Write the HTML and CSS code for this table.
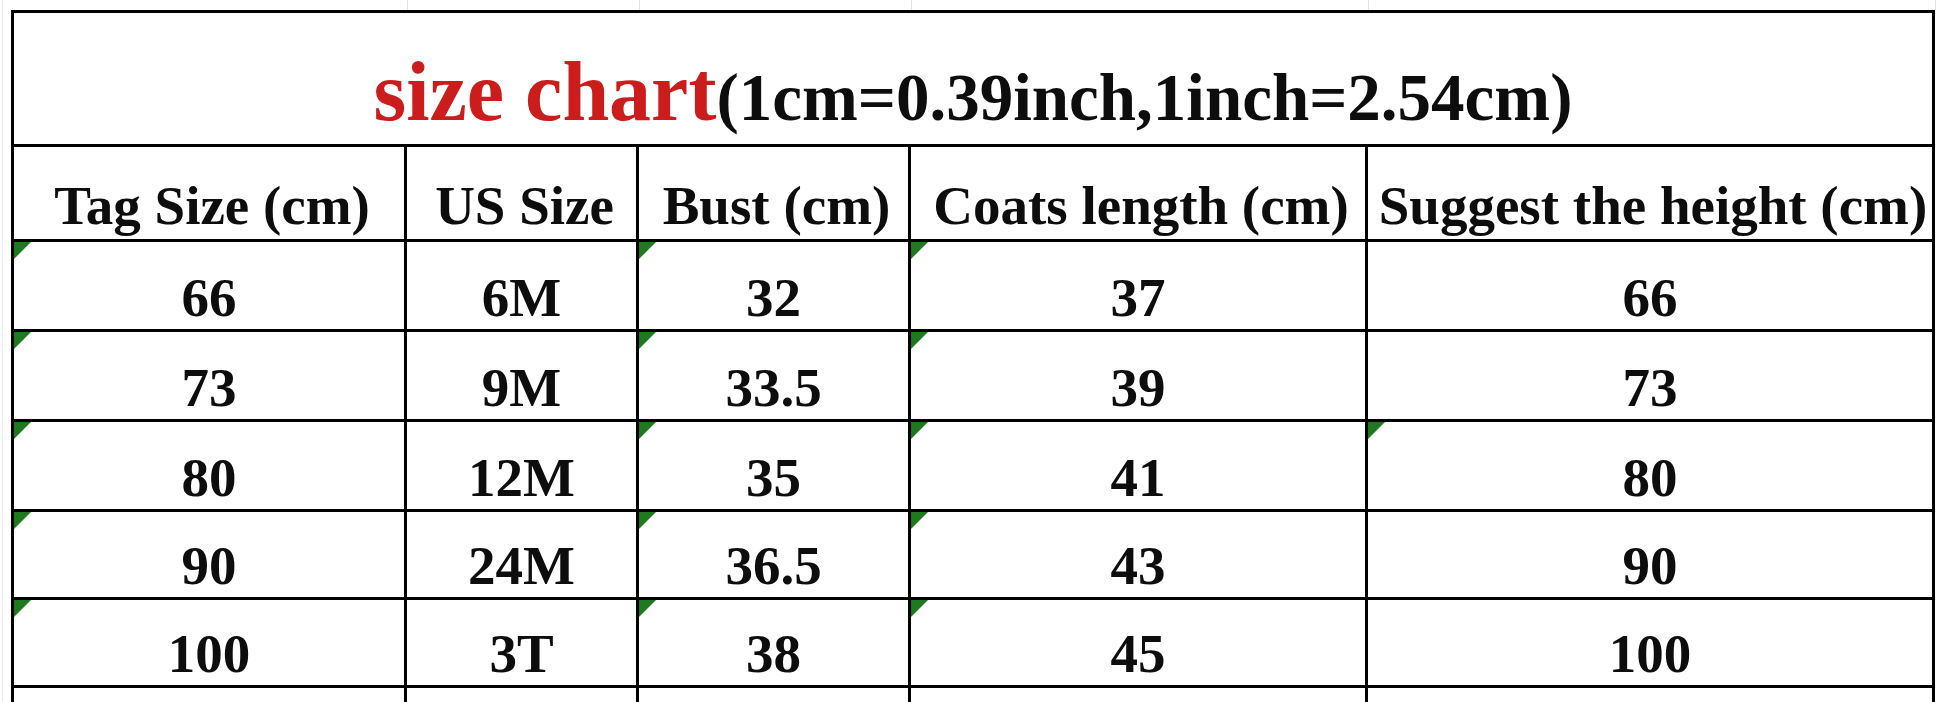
FILE: index.html
```html
<!DOCTYPE html>
<html lang="en">
<head>
    <meta charset="UTF-8">
    <meta name="viewport" content="width=device-width, initial-scale=1.0">
    <title>Size Chart</title>
    <link rel="stylesheet" href="styles.css">
</head>
<body>
    <div class="sheet">
        <div class="ghost-row">
            <div class="ghost" style="width: 393px"></div>
            <div class="ghost" style="width: 232px"></div>
            <div class="ghost" style="width: 272px"></div>
            <div class="ghost" style="width: 457px"></div>
            <div class="ghost" style="width: 567px"></div>
        </div>
        <table class="chart">
            <colgroup>
                <col class="c-tag">
                <col class="c-us">
                <col class="c-bust">
                <col class="c-coat">
                <col class="c-height">
            </colgroup>
            <tr class="title-row">
                <td colspan="5" class="title">
                    <span class="title-red">size chart</span><span class="title-note">(1cm=0.39inch,1inch=2.54cm)</span>
                </td>
            </tr>
            <tr class="head-row">
                <td>Tag Size (cm)</td>
                <td>US Size</td>
                <td>Bust (cm)</td>
                <td>Coats length (cm)</td>
                <td>Suggest the height (cm)</td>
            </tr>
            <tr class="row">
                <td class="flag">66</td>
                <td>6M</td>
                <td class="flag">32</td>
                <td class="flag">37</td>
                <td>66</td>
            </tr>
            <tr class="row">
                <td class="flag">73</td>
                <td>9M</td>
                <td class="flag">33.5</td>
                <td class="flag">39</td>
                <td>73</td>
            </tr>
            <tr class="row">
                <td class="flag">80</td>
                <td>12M</td>
                <td class="flag">35</td>
                <td class="flag">41</td>
                <td class="flag">80</td>
            </tr>
            <tr class="row short">
                <td class="flag">90</td>
                <td>24M</td>
                <td class="flag">36.5</td>
                <td class="flag">43</td>
                <td>90</td>
            </tr>
            <tr class="row short">
                <td class="flag">100</td>
                <td>3T</td>
                <td class="flag">38</td>
                <td class="flag">45</td>
                <td>100</td>
            </tr>
            <tr class="row">
                <td></td>
                <td></td>
                <td></td>
                <td></td>
                <td></td>
            </tr>
        </table>
    </div>
</body>
</html>
```

FILE: styles.css
```css
body {
    margin: 0;
    background-color: white;
    overflow: hidden;
    font-family: "Liberation Serif", "Times New Roman", serif;
    font-weight: bold;
    color: #0d0d0d;
}
.sheet {
    padding-left: 10px;
    border-left: 1px solid #ececec;
    margin-left: 2px;
    width: 1940px;
}
.ghost-row {
    display: flex;
    height: 10px;
    margin-left: 2px;
}
.ghost {
    border-right: 1px solid #e2e2e2;
    box-sizing: border-box;
}
.chart {
    border-collapse: collapse;
    table-layout: fixed;
    width: 1924px;
    margin-left: -2px;
}
.c-tag { width: 393px; }
.c-us { width: 232px; }
.c-bust { width: 272px; }
.c-coat { width: 457px; }
.c-height { width: 567px; }
.chart td {
    border: 3px solid #000;
    padding: 0;
    text-align: center;
    vertical-align: bottom;
    white-space: nowrap;
    position: relative;
}
.title-row td {
    height: 127px;
    padding-bottom: 4px;
}
.title-red {
    color: #cc1d1d;
    font-size: 84px;
}
.title-note {
    font-size: 67px;
}
.head-row td {
    height: 90px;
    font-size: 55px;
    padding-bottom: 2px;
    padding-left: 6px;
}
.row td {
    height: 87px;
    font-size: 55px;
}
.row.short td {
    height: 85px;
}
.flag::before {
    content: "";
    position: absolute;
    top: 0;
    left: 0;
    border-top: 17px solid #1f7a1f;
    border-right: 17px solid transparent;
}
```
